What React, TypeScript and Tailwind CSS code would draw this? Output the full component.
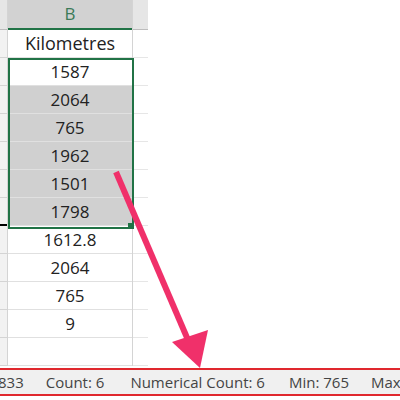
import React from 'react';

const rows = ['1587', '2064', '765', '1962', '1501', '1798', '1612.8', '2064', '765', '9', ''];

export default function App() {
  return (
    <div className="relative w-[400px] h-[400px] bg-white overflow-hidden" style={{ fontFamily: '"Open Sans", "Liberation Sans", sans-serif' }}>
      <div className="flex">
        <div className="w-[7px] flex flex-col">
          <div className="h-[30px] bg-[#e6e6e6] border-b border-[#bdbdbd]" />
          {['', ...rows].map((_, i) => (
            <div key={i} className={`h-[28px] bg-[#f2f2f2] border-b ${i === 6 ? 'border-b-2 border-black' : 'border-[#d4d4d4]'}`} />
          ))}
        </div>
        <div className="relative w-[126px] flex flex-col border-l border-r border-[#d4d4d4]">
          <div className="h-[30px] bg-[#d2d2d2] border-b-2 border-[#217346] flex items-center justify-center text-[17px] text-[#3b7a57]">B</div>
          <div className="h-[28px] border-b border-[#e0e0e0] flex items-center justify-center text-[18px] text-[#222]">Kilometres</div>
          {rows.map((r, i) => (
            <div key={i} className={`h-[28px] border-b border-[#e0e0e0] flex items-center justify-center text-[17px] text-[#222] ${i >= 1 && i <= 5 ? 'bg-[#d0d0d0]' : ''}`}>{r}</div>
          ))}
          <div className="absolute left-0 top-[58px] w-[126px] h-[171px] border-2 border-[#217346]" />
          <div className="absolute left-[120px] top-[223px] w-[6px] h-[6px] bg-[#217346]" />
        </div>
        <div className="w-[15px] flex flex-col">
          <div className="h-[30px] bg-[#e6e6e6] border-b border-[#bdbdbd]" />
          {['', ...rows].map((_, i) => (
            <div key={i} className="h-[28px] border-b border-[#e6e6e6]" />
          ))}
        </div>
      </div>
      <svg className="absolute left-0 top-0" width="400" height="400">
        <line x1="116" y1="172" x2="188" y2="340" stroke="#f0306a" strokeWidth="6" />
        <polygon points="172,342 208,330 200,368" fill="#f0306a" />
      </svg>
      <div className="absolute left-0 top-[368px] w-[400px] h-[28px] bg-[#f0f0f0] border-y-2 border-[#e0282e] flex items-center text-[15px] text-[#444] whitespace-nowrap overflow-hidden">
        <span className="ml-[-2px]">833</span>
        <span className="ml-[22px]">Count: 6</span>
        <span className="ml-[26px]">Numerical Count: 6</span>
        <span className="ml-[24px]">Min: 765</span>
        <span className="ml-[22px]">Max: 2064</span>
      </div>
    </div>
  );
}
